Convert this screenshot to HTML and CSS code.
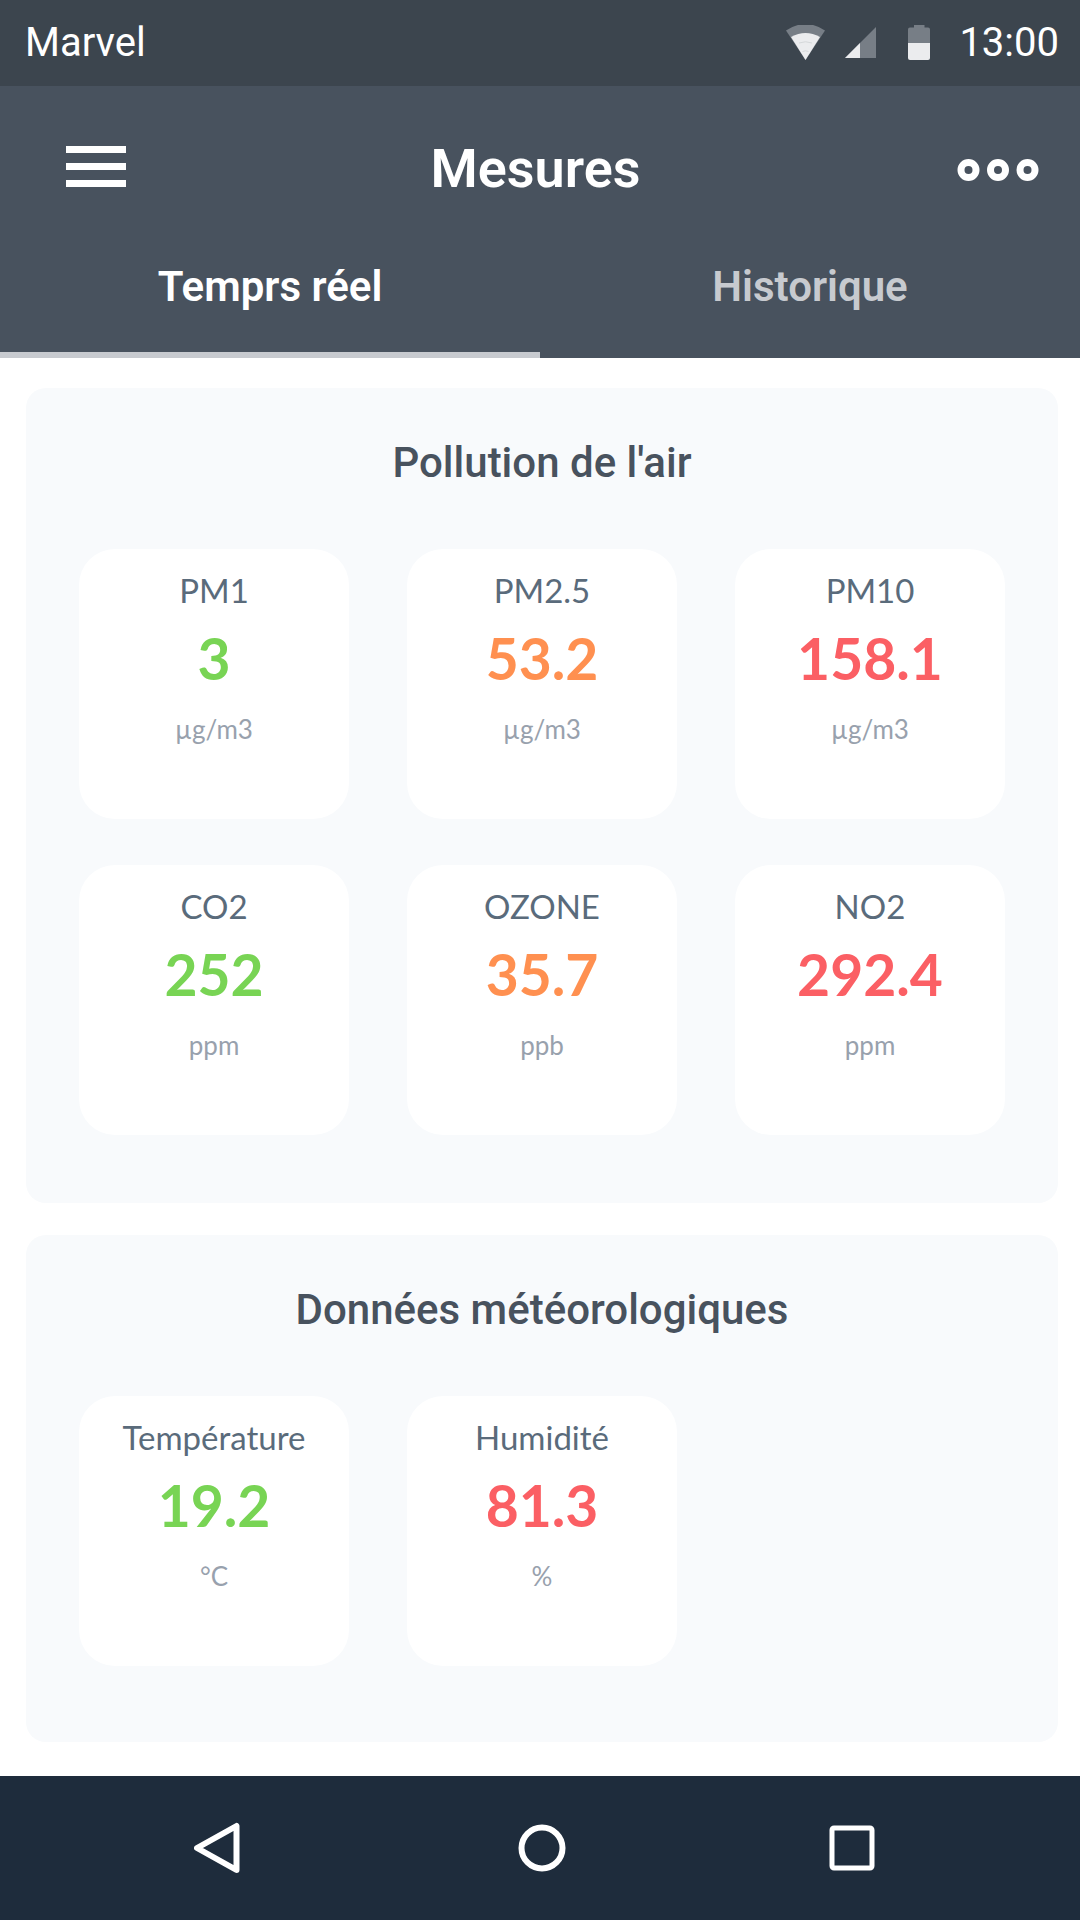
FILE: index.html
```html
<!DOCTYPE html>
<html lang="fr">
<head>
  <meta charset="utf-8">
  <meta name="viewport" content="width=device-width, initial-scale=1">
  <title>Mesures</title>
  <link rel="stylesheet" href="styles.css">
</head>
<body>
  <div class="screen">
    <div class="status">
      <span>Marvel</span>
      <div class="status-right">
        <svg class="icon-wifi" width="39" height="36" viewBox="0 0 39 36" aria-hidden="true">
          <path d="M0 5.500Q19.500-7.500 39 5.500L19.500 35Z" fill="#777e86"/>
          <path d="M5 12Q19.500 4 34 12L19.500 35Z" fill="#ebecee"/>
          <path d="M13 18Q19.500 15.500 26 18M16.500 26.500Q19.500 25 22.500 26.500" fill="none" stroke="#d5d8da" stroke-width="1"/>
        </svg>
        <svg class="icon-signal" width="31" height="36" viewBox="0 0 31 36" aria-hidden="true">
          <path d="M31 2V33H0Z" fill="#777e86"/>
          <path d="M15 18V33H0Z" fill="#ebecee"/>
        </svg>
        <svg class="icon-battery" width="22" height="36" viewBox="0 0 22 36" aria-hidden="true">
          <path d="M6 0H16.500V2.500H20Q22 2.500 22 4.500V18H0V4.500Q0 2.500 2 2.500H6Z" fill="#777e86"/>
          <path d="M0 18H22V33Q22 35 20 35H2Q0 35 0 33Z" fill="#ebecee"/>
        </svg>
        <span>13:00</span>
      </div>
    </div>

    <header class="header">
      <div class="toolbar">
        <button class="icon-button menu-button" type="button" aria-label="Menu">
          <svg width="60" height="46" viewBox="0 0 60 46" fill="#fff" aria-hidden="true">
            <rect width="60" height="7"/>
            <rect y="17" width="60" height="7"/>
            <rect y="34" width="60" height="7"/>
          </svg>
        </button>
        <h1 class="title">Mesures</h1>
        <button class="icon-button more-button" type="button" aria-label="Plus">
          <svg width="82" height="24" viewBox="0 0 82 24" fill="none" stroke="#fff" stroke-width="7" aria-hidden="true">
            <circle cx="11.500" cy="13" r="7.500"/>
            <circle cx="41" cy="13" r="7.500"/>
            <circle cx="70.500" cy="13" r="7.500"/>
          </svg>
        </button>
      </div>
      <nav class="tabs">
        <a class="tab tab-active" href="#temps-reel" aria-current="page">Temprs réel</a>
        <a class="tab" href="#historique">Historique</a>
      </nav>
    </header>

    <main class="content" id="temps-reel">
      <section class="card">
        <h2 class="card-title">Pollution de l'air</h2>
        <div class="tiles">
          <div class="tile"><span class="label">PM1</span><strong class="value good">3</strong><span class="unit">µg/m3</span></div>
          <div class="tile"><span class="label">PM2.5</span><strong class="value medium">53.2</strong><span class="unit">µg/m3</span></div>
          <div class="tile"><span class="label">PM10</span><strong class="value bad">158.1</strong><span class="unit">µg/m3</span></div>
          <div class="tile"><span class="label">CO2</span><strong class="value good">252</strong><span class="unit">ppm</span></div>
          <div class="tile"><span class="label">OZONE</span><strong class="value medium">35.7</strong><span class="unit">ppb</span></div>
          <div class="tile"><span class="label">NO2</span><strong class="value bad">292.4</strong><span class="unit">ppm</span></div>
        </div>
      </section>
      <section class="card card-fill">
        <h2 class="card-title">Données météorologiques</h2>
        <div class="tiles">
          <div class="tile"><span class="label">Température</span><strong class="value good">19.2</strong><span class="unit">°C</span></div>
          <div class="tile"><span class="label">Humidité</span><strong class="value bad">81.3</strong><span class="unit">%</span></div>
        </div>
      </section>
    </main>

    <footer class="system-nav">
      <button class="icon-button" type="button" aria-label="Retour">
        <svg width="46" height="52" viewBox="0 0 46 52" fill="none" stroke="#fff" stroke-width="6" stroke-linejoin="round" aria-hidden="true"><path d="M42.500 4V48L3 26Z"/></svg>
      </button>
      <button class="icon-button home-button" type="button" aria-label="Accueil">
        <svg width="48" height="48" viewBox="0 0 48 48" fill="none" stroke="#fff" stroke-width="6" aria-hidden="true"><circle cx="24" cy="24" r="20.500"/></svg>
      </button>
      <button class="icon-button" type="button" aria-label="Applications récentes">
        <svg width="46" height="46" viewBox="0 0 46 46" fill="none" stroke="#fff" stroke-width="5" aria-hidden="true"><rect x="3" y="3" width="40" height="40" rx="2"/></svg>
      </button>
    </footer>
  </div>
</body>
</html>
```

FILE: styles.css
```css
* {
  box-sizing: border-box;
}

body {
  margin: 0;
  background: #fff;
  font-family: Roboto, "Liberation Sans", sans-serif;
}

.screen {
  display: flex;
  flex-direction: column;
  min-height: 100vh;
}

.icon-button {
  display: flex;
  padding: 0;
  border: 0;
  background: none;
  cursor: pointer;
}

/* Status bar */
.status {
  display: flex;
  align-items: center;
  justify-content: space-between;
  padding: 19px 21px 19px 25px;
  background: #3c454e;
  color: #fff;
  font-size: 40px;
  line-height: 48px;
}

.status-right {
  display: flex;
  align-items: center;
}

.icon-wifi {
  margin-right: 20px;
}

.icon-signal {
  margin-right: 32px;
}

.icon-battery {
  margin-right: 29px;
}

/* Header */
.header {
  background: #48525e;
  color: #fff;
}

.toolbar {
  display: grid;
  grid-template-columns: 1fr auto 1fr;
  align-items: center;
  padding: 51px 41px 51px 32px;
}

.menu-button {
  justify-self: start;
  padding-left: 34px;
}

.more-button {
  justify-self: end;
}

.title {
  margin: 0;
  font-size: 54px;
  font-weight: 600;
  line-height: 64px;
}

.tabs {
  display: grid;
  grid-template-columns: 1fr 1fr;
}

.tab {
  padding: 10px 0 40px;
  border-bottom: 6px solid transparent;
  color: #c7cacf;
  font-size: 42px;
  font-weight: 600;
  line-height: 50px;
  text-align: center;
  text-decoration: none;
}

.tab-active {
  border-color: #c7cacf;
  color: #fff;
}

/* Cards */
.content {
  display: flex;
  flex: 1;
  flex-direction: column;
  gap: 32px;
  padding: 30px 22px 34px 26px;
}

.card {
  padding: 50px 53px 68px;
  border-radius: 20px;
  background: #f8fafc;
}

.card-fill {
  flex: 1;
}

.card-title {
  margin: 0 0 61px;
  color: #48525e;
  font-size: 42px;
  font-weight: 500;
  line-height: 50px;
  text-align: center;
}

.tiles {
  display: grid;
  grid-template-columns: repeat(3, 1fr);
  gap: 46px 58px;
}

.tile {
  display: flex;
  flex-direction: column;
  align-items: center;
  aspect-ratio: 1;
  padding-top: 21px;
  border-radius: 36px;
  background: #fff;
  font-family: Lato, "Liberation Sans", sans-serif;
}

.label {
  color: #5a6b7b;
  font-size: 33px;
  line-height: 40px;
}

.value {
  font-size: 57px;
  font-weight: 700;
  line-height: 96px;
}

.unit {
  color: #98a1ad;
  font-size: 26px;
  line-height: 46px;
}

.good {
  color: #78d454;
}

.medium {
  color: #ff9050;
}

.bad {
  color: #fb5f64;
}

/* System navigation */
.system-nav {
  display: flex;
  align-items: center;
  justify-content: space-between;
  padding: 46px 205px 46px 194px;
  background: #1e2c3c;
}

.home-button {
  padding-left: 14px;
}
```
